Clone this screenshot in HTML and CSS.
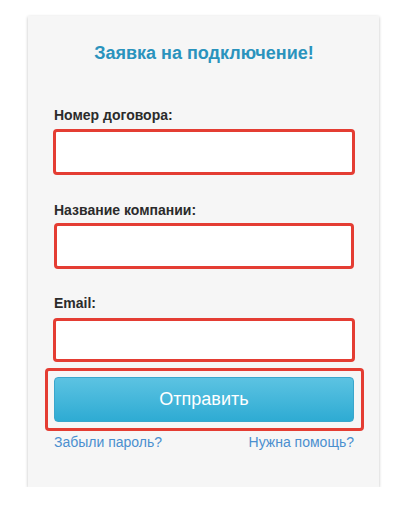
FILE: index.html
```html
<!DOCTYPE html>
<html lang="ru">
<head>
<meta charset="utf-8">
<title>Заявка на подключение</title>
<link rel="stylesheet" href="styles.css">
</head>
<body>
<div class="card">
  <h2 class="title">Заявка на подключение!</h2>
  <form class="form">
    <label class="label label-first">Номер договора:</label>
    <div class="field"></div>
    <label class="label">Название компании:</label>
    <div class="field field-narrow"></div>
    <label class="label label-email">Email:</label>
    <div class="field field-email"></div>
    <div class="btn-wrap">
      <button type="button" class="btn">Отправить</button>
    </div>
    <div class="links">
      <a href="#" class="link">Забыли пароль?</a>
      <a href="#" class="link">Нужна помощь?</a>
    </div>
  </form>
</div>
</body>
</html>
```
FILE: styles.css
```css
html, body {
  margin: 0;
  padding: 0;
  background: #ffffff;
}
body {
  font-family: "Liberation Sans", Arial, sans-serif;
}
.card {
  margin: 16px 0 0 28px;
  width: 351px;
  height: 471px;
  box-sizing: border-box;
  background: #f6f6f6;
  padding: 0 24px 0 25px;
  box-shadow: 0 1px 3px rgba(0,0,0,0.25);
}
.title {
  margin: 0;
  padding-top: 27px;
  text-align: center;
  font-size: 18px;
  line-height: 20px;
  font-weight: bold;
  color: #2a93bd;
}
.form {
  display: flex;
  flex-direction: column;
}
.label {
  display: block;
  font-size: 14px;
  line-height: 16px;
  font-weight: bold;
  color: #2b2b2b;
  margin: 27px 0 5px 1px;
}
.label-first {
  margin-top: 44px;
  margin-bottom: 6px;
}
.label-email {
  margin-top: 26px;
  margin-bottom: 7px;
}
.field {
  height: 46px;
  box-sizing: border-box;
  border: 3px solid #e43d33;
  border-radius: 4px;
  background: #ffffff;
}
.field-narrow {
  margin: 0 1px;
}
.field-email {
  height: 44px;
}
.btn-wrap {
  margin: 6px -9px 0 -8px;
  border: 3px solid #e43d33;
  border-radius: 4px;
  padding: 6px 7px 6px 6px;
}
.btn {
  display: block;
  width: 100%;
  height: 45px;
  border: 1px solid #3aa6cc;
  border-radius: 4px;
  background: linear-gradient(to bottom, #5cc3e2, #2eabd3);
  color: #ffffff;
  font-family: "Liberation Sans", Arial, sans-serif;
  font-size: 18px;
  padding: 0;
}
.links {
  display: flex;
  justify-content: space-between;
  margin: 3px 1px 0 1px;
}
.link {
  font-size: 14px;
  line-height: 16px;
  color: #4a8fcf;
  text-decoration: none;
}
```
